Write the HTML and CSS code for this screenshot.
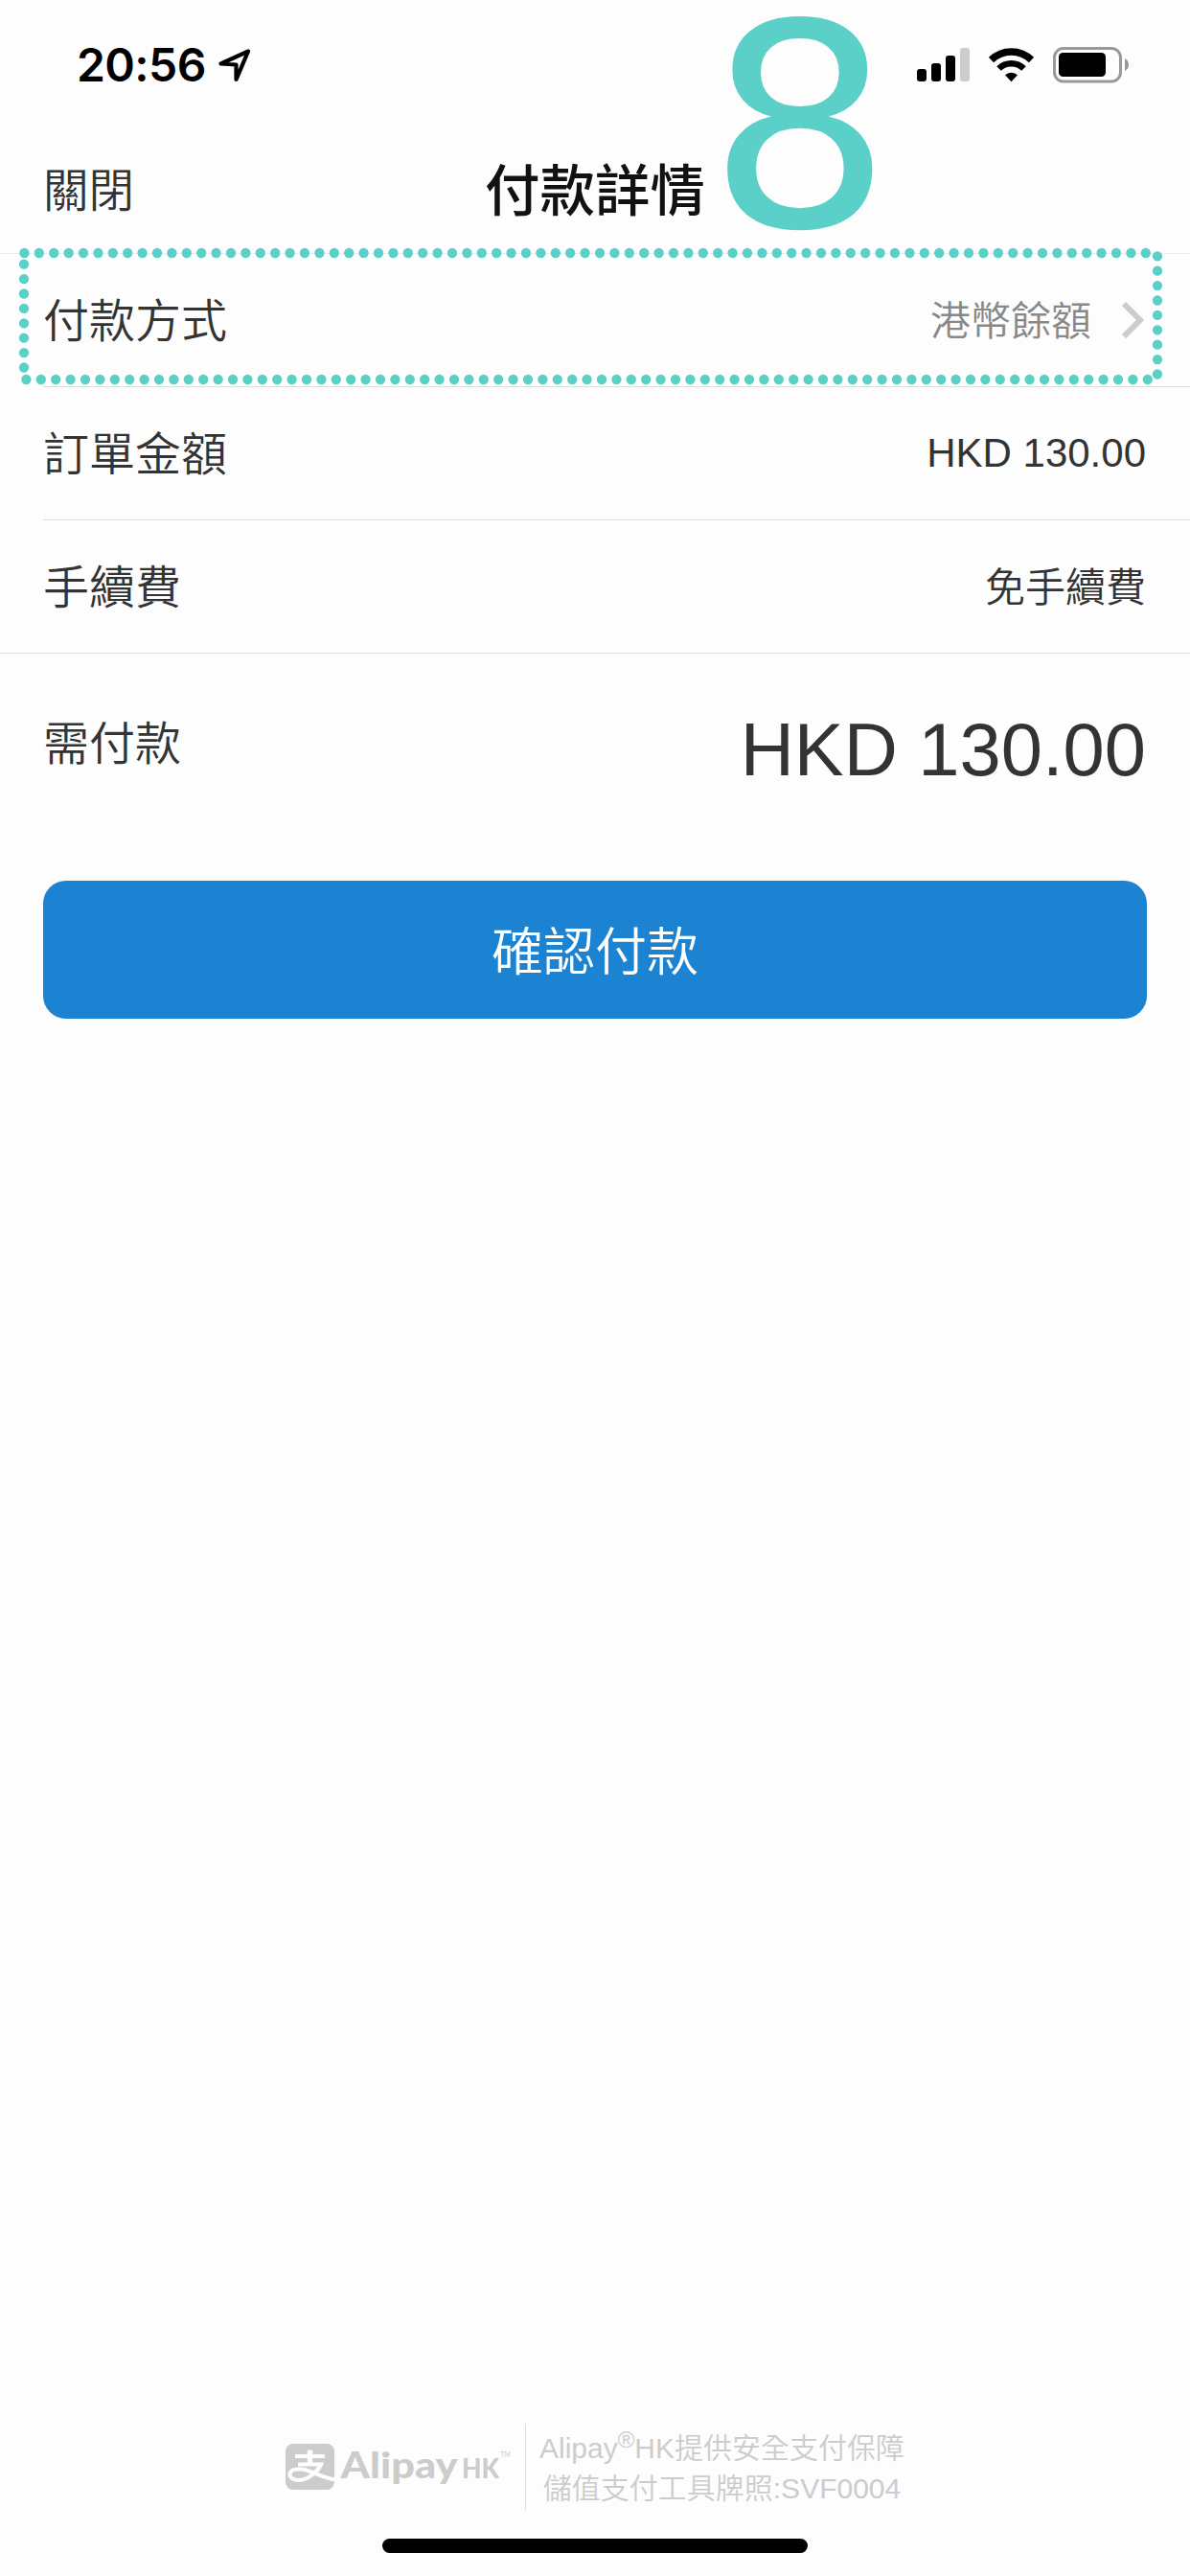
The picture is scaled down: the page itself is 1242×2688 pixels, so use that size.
FILE: index.html
```html
<!DOCTYPE html>
<html lang="zh-Hant">
<head>
  <meta charset="UTF-8" />
  <title>付款詳情</title>
  <link rel="stylesheet" href="styles.css">
</head>
<body>
  <div class="screen">
    <div class="status-bar">
      <div class="status-left">
        <span class="time">20:56</span>
        <svg class="location" width="34" height="36" viewBox="0 0 34 36">
          <path d="M31 3.5 L2.5 16.5 L18.5 17.500 V33 Z" fill="none" stroke="#000" stroke-width="4.200" stroke-linejoin="round" />
        </svg>
      </div>
      <svg class="status-icons" width="224" height="40" viewBox="956 48 224 40">
        <!-- signal -->
        <rect x="957" y="72" width="10" height="13" rx="3" />
        <rect x="972" y="66" width="10" height="19" rx="3" />
        <rect x="987" y="58" width="10" height="27" rx="3" />
        <rect x="1002" y="50" width="10" height="35" rx="3" fill="#ccc" />
        <!-- wifi -->
        <path d="M1034.5 62.5 A30 30 0 0 1 1076.500 62.500" fill="none" stroke="#000" stroke-width="7.500" />
        <path d="M1042.500 71.500 A18.500 18.500 0 0 1 1068.500 71.500" fill="none" stroke="#000" stroke-width="6.500" />
        <path d="M1049 78.300 A9.500 9.500 0 0 1 1062 78.300 L1055.500 85.300 Z" />
        <!-- battery -->
        <rect x="1100.500" y="50.500" width="69" height="34.500" rx="9.500" fill="none" stroke="#999" stroke-width="3" />
        <rect x="1105" y="55" width="49" height="25" rx="4.500" />
        <path d="M1174 61 Q1178 63 1178 67.500 Q1178 72 1174 74 Z" fill="#999" />
      </svg>
    </div>

    <div class="nav">
      <span class="close">關閉</span>
      <h1 class="title">付款詳情</h1>
      <span class="step">8</span>
    </div>

    <div class="row method">
      <span class="label">付款方式</span>
      <span class="value muted">港幣餘額</span>
      <svg class="chevron" width="26" height="42" viewBox="0 0 26 42">
        <path d="M3 4 L20 21 L3 38" fill="none" stroke="#ccc" stroke-width="6" />
      </svg>
      <svg class="highlight" width="1200" height="150" viewBox="16 256 1200 150">
        <path d="M25.400 264 H1200" />
        <path d="M27.400 396 H1202" />
        <path d="M25 275.700 V386" />
        <path d="M1208 267.300 V394" />
      </svg>
    </div>
    <div class="row">
      <span class="label">訂單金額</span>
      <span class="value price">HKD 130.00</span>
    </div>
    <div class="row last">
      <span class="label">手續費</span>
      <span class="value">免手續費</span>
    </div>

    <div class="total">
      <span class="label">需付款</span>
      <span class="amount">HKD 130.00</span>
    </div>

    <button class="pay" type="button">確認付款</button>

    <div class="footer">
      <svg class="logo" width="236" height="56" viewBox="298 2546 236 56">
        <rect x="298" y="2550" width="51" height="48" rx="8" fill="#ccc" />
        <g fill="none" stroke="#fdfdfd" stroke-width="4">
          <path d="M308 2563 H339" />
          <path d="M323.500 2556.500 V2571" stroke-width="5.500" />
          <path d="M311 2571.500 H335 C331 2580 321 2588 312 2588 C305 2588 301 2584 303 2580 C305 2576 314 2575 324 2579 C333 2582.500 340 2586 350 2587.500" stroke-width="4.200" />
        </g>
        <text class="brand" x="355.500" y="2586" textLength="122" lengthAdjust="spacingAndGlyphs">Alipay</text>
        <text class="brand-hk" x="482" y="2586" textLength="39" lengthAdjust="spacingAndGlyphs">HK</text>
        <text class="brand-tm" x="522.500" y="2564" textLength="10" lengthAdjust="spacingAndGlyphs">TM</text>
      </svg>
      <div class="licence">
        <div>Alipay<span class="reg">®</span>HK提供安全支付保障</div>
        <div>儲值支付工具牌照:SVF0004</div>
      </div>
    </div>
    <div class="home-bar"></div>
  </div>
</body>
</html>
```
FILE: styles.css
```css
* {
  box-sizing: border-box;
}
body {
  margin: 0;
  background: #fdfdfd;
  color: #333;
  font-family: "Liberation Sans", "Noto Sans CJK TC", sans-serif;
}
.screen {
  display: flex;
  flex-direction: column;
  height: 2688px;
}
.status-bar {
  display: flex;
  justify-content: space-between;
  align-items: center;
  height: 136px;
  padding: 0 62px 0 80px;
}
.status-left {
  display: flex;
  align-items: center;
  gap: 13px;
}
.time {
  font: 600 48px/60px Inter, sans-serif;
  letter-spacing: -0.600px;
  color: #000;
}
.nav {
  position: relative;
  display: grid;
  grid-template-columns: 1fr auto 1fr;
  align-items: center;
  height: 129px;
  padding: 0 45px 10px;
  border-bottom: 1px solid #eee;
}
.close {
  font-size: 47.500px;
  font-weight: 350;
}
.title {
  margin: 0;
  font-size: 57.500px;
  font-weight: 500;
  color: #111;
}
/* big step number over the header */
.step {
  position: absolute;
  left: 741px;
  top: -149px;
  font: 295px/295px "DejaVu Sans", sans-serif;
  color: #5bd0c9;
  transform: scaleX(1.025);
}
.row {
  position: relative;
  display: flex;
  align-items: center;
  height: 139px;
  margin-left: 45px;
  padding-right: 46px;
  border-bottom: 1px solid #ddd;
}
.row.last {
  margin-left: 0;
  padding-left: 45px;
}
.label {
  flex: 1;
  padding-bottom: 7px;
  font-size: 48px;
  font-weight: 350;
}
.value {
  padding-bottom: 6px;
  font-size: 42px;
  font-weight: 350;
}
.value.price {
  padding-bottom: 0;
}
.muted {
  color: #888;
}
.chevron {
  margin-left: 31px;
}
.highlight {
  position: absolute;
  left: -29px;
  top: -9px;
  fill: none;
  stroke: #5bd0c9;
  stroke-width: 10.300px;
  stroke-linecap: round;
  stroke-dasharray: 0 15.400px;
}
.total {
  display: flex;
  align-items: center;
  height: 237px;
  padding: 0 46px 0 45px;
}
.total .label {
  padding-bottom: 57px;
}
.amount {
  padding-bottom: 37px;
  font-size: 77.700px;
}
.pay {
  height: 144px;
  margin: 0 45px;
  padding-bottom: 4px;
  border: none;
  border-radius: 24px;
  background: #1c82d2;
  color: #fff;
  font-family: inherit;
  font-size: 54px;
  font-weight: 350;
}
.footer {
  display: flex;
  justify-content: center;
  align-items: center;
  height: 90px;
  margin-top: auto;
}
.logo {
  margin-right: 14px;
}
.brand, .brand-hk, .brand-tm {
  fill: #ccc;
  font-family: Lato, sans-serif;
  font-weight: 900;
}
.brand {
  font-size: 37px;
}
.brand-hk {
  font-size: 29px;
}
.brand-tm {
  font-size: 7px;
  font-weight: 400;
}
.licence {
  height: 90px;
  padding: 5px 0 0 14px;
  border-left: 1px solid #ddd;
  font-size: 30px;
  font-weight: 350;
  line-height: 42px;
  text-align: center;
  color: #ccc;
}
.reg {
  position: relative;
  top: -11px;
  font-size: 24px;
  line-height: 1;
}
.home-bar {
  width: 444px;
  height: 15px;
  margin: 30px auto 24px;
  border-radius: 8px;
  background: #000;
}
```
